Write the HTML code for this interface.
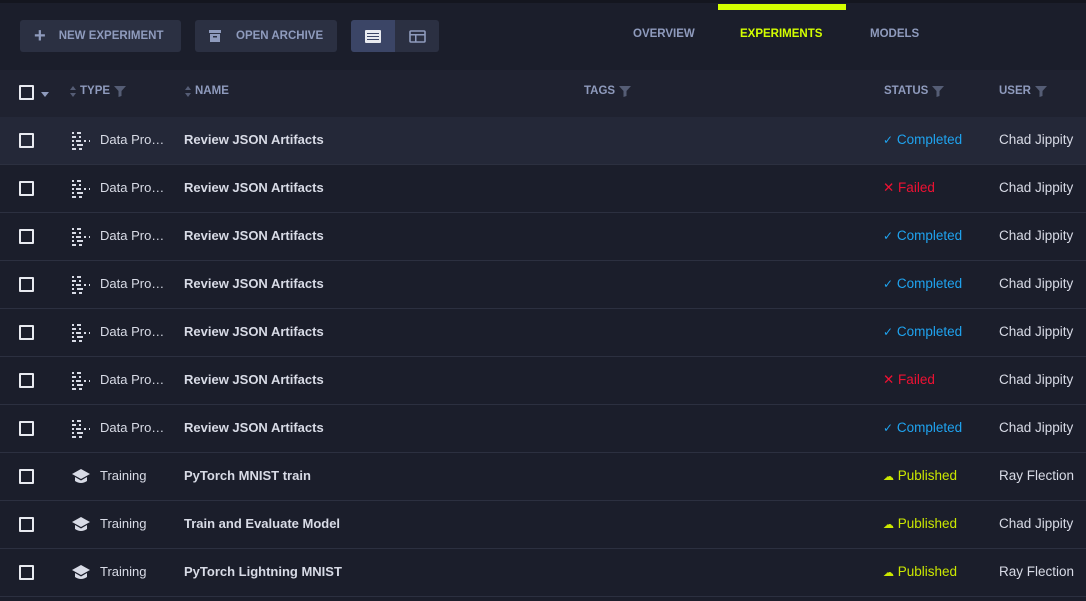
<!DOCTYPE html>
<html><head><style>
*{margin:0;padding:0;box-sizing:border-box}
body{width:1086px;height:601px;overflow:hidden;background:#1b1e2b;font-family:"Liberation Sans",sans-serif;position:relative}
.top{position:absolute;left:0;top:0;width:1086px;height:3px;background:#14161f}
.btn{position:absolute;top:20px;height:32px;background:#2b3042;border-radius:3px;color:#8f9bbd;font-size:11.5px;font-weight:bold;display:flex;align-items:center}
.tab{position:absolute;top:28px;font-size:11.5px;font-weight:bold;color:#8f9bbd}
.hdr{position:absolute;left:0;top:70px;width:1086px;height:47px;background:#1f2230}
.h{position:absolute;top:85px;font-size:11.5px;font-weight:bold;color:#8f9bbd;display:flex;align-items:center;gap:4px}
.row{position:absolute;left:0;width:1086px;height:48px;border-bottom:1px solid #2c3040}
.row div{position:absolute;top:15px;font-size:13.5px;color:#d8dbe6}
.cb{position:absolute;left:19px;width:15px;height:15px;border:2px solid #e8eaf0;border-radius:1px}
</style></head><body>
<div class="top"></div>
<div style="position:absolute;left:718px;top:4px;width:128px;height:6px;background:#d4ff00"></div>
<div class="btn" style="left:20px;width:161px"><span style="font-size:20px;margin:0 13px 0 14px;font-weight:bold">+</span>NEW EXPERIMENT</div>
<div class="btn" style="left:195px;width:142px"><svg style="margin:0 15px 0 14px" width="12" height="14"><rect x="0" y="1" width="12" height="3" fill="#8f9bbd"/><rect x="1" y="5" width="10" height="8" fill="#8f9bbd"/><rect x="4" y="7" width="4" height="1.5" fill="#2b3042"/></svg>OPEN ARCHIVE</div>
<div style="position:absolute;left:351px;top:20px;width:88px;height:32px;background:#2b3042;border-radius:3px"></div>
<div style="position:absolute;left:351px;top:20px;width:44px;height:32px;background:#3b4566;border-radius:3px 0 0 3px"></div>
<svg style="position:absolute;left:365px;top:30px" width="16" height="13"><rect width="16" height="13" rx="1" fill="#e8eaf0"/><g fill="#3b4566"><rect x="2" y="3" width="12" height="1"/><rect x="2" y="6" width="12" height="1"/><rect x="2" y="9" width="12" height="1"/></g></svg>
<svg style="position:absolute;left:409px;top:30px" width="17" height="13"><rect x="1" y="1" width="15" height="11" rx="1" fill="none" stroke="#8f9bbd" stroke-width="1.6"/><rect x="1" y="4" width="15" height="1.5" fill="#8f9bbd"/><rect x="6" y="4" width="1.5" height="8" fill="#8f9bbd"/></svg>
<div class="tab" style="left:633px">OVERVIEW</div>
<div class="tab" style="left:740px;color:#d4ff00">EXPERIMENTS</div>
<div class="tab" style="left:870px">MODELS</div>
<div class="hdr"></div>
<div class="cb" style="top:85px"></div>
<div style="position:absolute;left:41px;top:92px;border:4px solid transparent;border-top:5px solid #8f9bbd;border-bottom:0"></div>
<div id="hd"></div>
<div id="rows"></div>
<script>
var f='<svg width="12" height="12" viewBox="0 0 12 12"><path d="M0 1H12L7.5 6V11L4.5 12V6Z" fill="#555d75"/></svg>';
var s='<svg width="6" height="11" viewBox="0 0 6 11" fill="#555d75"><path d="M3 0L6 4H0Z M3 11L0 7H6Z"/></svg>';
var H=[[70,s+'TYPE'+f],[185,s+'NAME'],[584,'TAGS'+f],[884,'STATUS'+f],[999,'USER'+f]];
document.getElementById('hd').innerHTML=H.map(function(x){return '<div class="h" style="left:'+x[0]+'px">'+x[1]+'</div>'}).join('');
var d='<svg width="20" height="20" viewBox="0 0 20 20" fill="#d8dbe6"><rect x="1" y="1" width="2" height="2"/><rect x="6" y="1" width="4" height="2"/><rect x="1" y="5" width="4" height="2"/><rect x="8" y="5" width="2" height="2"/><rect x="1" y="9" width="2" height="2"/><rect x="5" y="9" width="5" height="2"/><rect x="13" y="9" width="2" height="2"/><rect x="18" y="9" width="1" height="2"/><rect x="1" y="13" width="2" height="2"/><rect x="6" y="13" width="6" height="2"/><rect x="1" y="17" width="4" height="2"/><rect x="8" y="17" width="3" height="2"/></svg>';
var t='<svg width="20" height="18" viewBox="0 0 20 18" fill="#d8dbe6"><path d="M10 2 L19 7 L10 12 L1 7Z"/><path d="M4 10 V14 Q10 18 16 14 V10 L10 13.5Z"/></svg>';
var R=[[d,'Data Pro…','Review JSON Artifacts','c','Chad Jippity'],[d,'Data Pro…','Review JSON Artifacts','f','Chad Jippity'],[d,'Data Pro…','Review JSON Artifacts','c','Chad Jippity'],[d,'Data Pro…','Review JSON Artifacts','c','Chad Jippity'],[d,'Data Pro…','Review JSON Artifacts','c','Chad Jippity'],[d,'Data Pro…','Review JSON Artifacts','f','Chad Jippity'],[d,'Data Pro…','Review JSON Artifacts','c','Chad Jippity'],[t,'Training','PyTorch MNIST train','p','Ray Flection'],[t,'Training','Train and Evaluate Model','p','Chad Jippity'],[t,'Training','PyTorch Lightning MNIST','p','Ray Flection']];
var S={c:'<span style="color:#1fa3ef"><span style="font-size:12px">✓</span> Completed</span>',f:'<span style="color:#ee1133">✕ Failed</span>',p:'<span style="color:#cbe800"><span style="font-size:11px">☁</span> Published</span>'};
var h='';R.forEach(function(r,i){var y=117+i*48;h+='<div class="row" style="top:'+y+'px;'+(i==0?'background:#242838':'')+'"><span class="cb" style="top:16px"></span><div style="left:71px;top:14px">'+r[0]+'</div><div style="left:100px;font-size:13px">'+r[1]+'</div><div style="left:184px;font-weight:bold;font-size:13px">'+r[2]+'</div><div style="left:883px">'+S[r[3]]+'</div><div style="left:999px">'+r[4]+'</div></div>';});
document.getElementById('rows').innerHTML=h;
</script>
</body></html>
